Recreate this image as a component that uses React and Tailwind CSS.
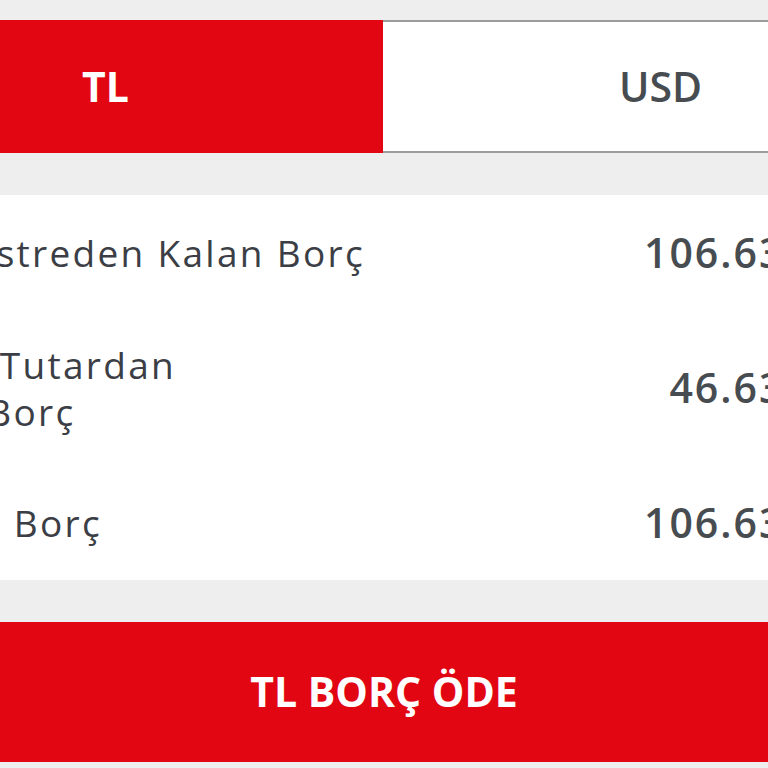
import React, { useState } from 'react';

const rows = [
    { label: ['Son Ekstreden Kalan Borç'], value: '106.636,00 TL', h: 'h-[115px]' },
    { label: ['Asgari Tutardan', 'Kalan Borç'], value: '46.636,00 TL', h: 'h-[155px]' },
    { label: ['Güncel Borç'], value: '106.636,00 TL', h: 'h-[115px]' },
];

const App = () => {
    const [currency, setCurrency] = useState('TL');

    return (
        <div className="w-[768px] h-[768px] overflow-hidden bg-[#eeeeee] font-['Open_Sans','Liberation_Sans',sans-serif]">
            <div className="w-[1110px] -ml-[172px] pt-[20px]">
                {/* currency tabs */}
                <div className="flex h-[133px]">
                    {['TL', 'USD'].map((c) => (
                        <button
                            key={c}
                            onClick={() => setCurrency(c)}
                            className={
                                currency === c
                                    ? 'flex-1 flex items-center justify-center bg-[#e20613] text-white text-[41px] font-bold'
                                    : 'flex-1 flex items-center justify-center bg-white border-y-2 border-[#9c9c9c] text-[#474c51] text-[41px] font-semibold'
                            }
                        >
                            {c}
                        </button>
                    ))}
                </div>

                {/* debt summary */}
                <div className="mt-[42px] bg-white">
                    {rows.map((r) => (
                        <div key={r.value + r.h} className={`${r.h} flex items-center justify-between pl-[40px] pr-[2px]`}>
                            <span className="text-[37px] leading-[47px] tracking-[2.3px] text-[#3b3e45]">
                                {r.label.map((l, i) => (
                                    <span key={i} className="block">{l}</span>
                                ))}
                            </span>
                            <span className="text-[41px] font-semibold tracking-[2px] text-[#474c51]">{r.value}</span>
                        </div>
                    ))}
                </div>

                <button className="mt-[42px] w-full h-[140px] ml-[172px] max-w-[768px] flex items-center justify-center bg-[#e20613] text-white text-[41px] font-bold">
                    {currency} BORÇ ÖDE
                </button>
            </div>
        </div>
    );
};

export default App;
